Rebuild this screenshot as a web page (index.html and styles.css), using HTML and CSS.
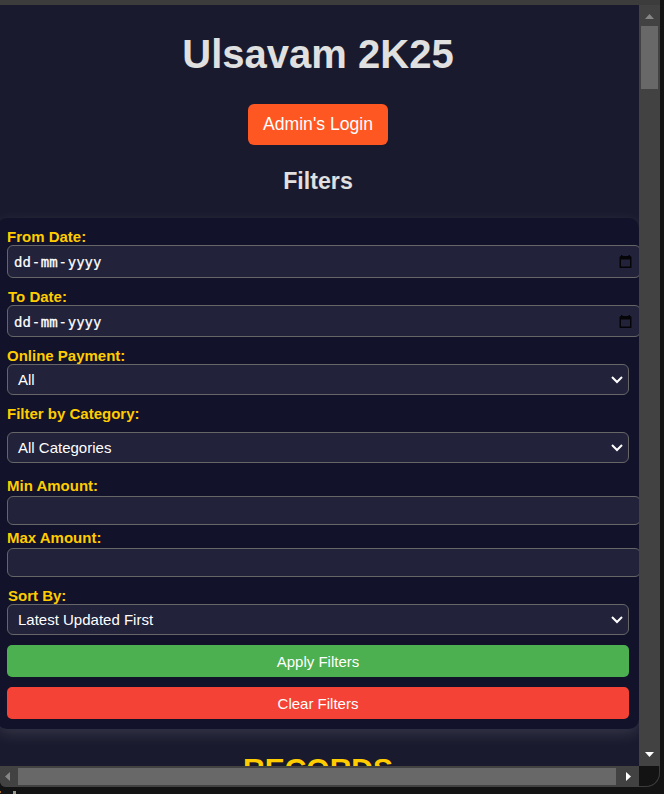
FILE: index.html
```html
<!DOCTYPE html>
<html lang="en">
<head>
<meta charset="utf-8">
<title>Ulsavam 2K25</title>
<link rel="stylesheet" href="styles.css">
</head>
<body>
<div class="window">
  <main class="page">
    <h1>Ulsavam 2K25</h1>
    <button class="login">Admin's Login</button>
    <h2>Filters</h2>
    <section class="panel">
      <div class="label">From Date:</div>
      <div class="control date wide"><span class="mask"><span>dd</span><i>-</i><span class="month">mm</span><i>-</i><span>yyyy</span></span>
        <svg class="calendar" width="13" height="14" viewBox="0 0 13 14"><path d="M2 0h1.500v1h6V0H11v1h.5l1 1v10.500l-.5.500H1l-.5-.5V2l1-1H2zM2 4.500v7h9v-7z" fill="#050508" fill-rule="evenodd"/></svg></div>
      <div class="label to-date">To Date:</div>
      <div class="control date date-to wide"><span class="mask"><span>dd</span><i>-</i><span class="month">mm</span><i>-</i><span>yyyy</span></span>
        <svg class="calendar" width="13" height="14" viewBox="0 0 13 14"><path d="M2 0h1.500v1h6V0H11v1h.5l1 1v10.500l-.5.500H1l-.5-.5V2l1-1H2zM2 4.500v7h9v-7z" fill="#050508" fill-rule="evenodd"/></svg></div>
      <div class="label payment">Online Payment:</div>
      <div class="control select"><span>All</span><svg class="chevron" width="12" height="8" viewBox="0 0 12 8"><path d="M1 1l5 5 5-5"/></svg></div>
      <div class="label category">Filter by Category:</div>
      <div class="control select"><span>All Categories</span><svg class="chevron" width="12" height="8" viewBox="0 0 12 8"><path d="M1 1l5 5 5-5"/></svg></div>
      <div class="label minimum">Min Amount:</div>
      <div class="control amount wide"></div>
      <div class="label maximum">Max Amount:</div>
      <div class="control amount wide"></div>
      <div class="label sort">Sort By:</div>
      <div class="control select"><span>Latest Updated First</span><svg class="chevron" width="12" height="8" viewBox="0 0 12 8"><path d="M1 1l5 5 5-5"/></svg></div>
      <button class="action apply">Apply Filters</button>
      <button class="action clear">Clear Filters</button>
    </section>
    <h2 class="records">RECORDS</h2>
  </main>
  <div class="vbar">
    <svg width="9" height="5" viewBox="0 0 9 5"><path d="M4.500 0L9 5H0z" fill="#868686"/></svg>
    <div class="vthumb"></div>
    <svg class="arrow-down" width="9" height="5" viewBox="0 0 9 5"><path d="M0 0h9L4.500 5z" fill="#fff"/></svg>
  </div>
  <div class="hbar">
    <svg width="5" height="9" viewBox="0 0 5 9"><path d="M5 0v9L0 4.500z" fill="#868686"/></svg>
    <div class="hthumb"></div>
    <svg class="arrow-right" width="5" height="9" viewBox="0 0 5 9"><path d="M0 0v9l5-4.500z" fill="#fff"/></svg>
  </div>
  <div class="corner"></div>
</div>
<div class="backdrop"><span class="fleck"></span><span class="fleck pale"></span></div>
</body>
</html>
```
FILE: styles.css
```css
* { box-sizing: border-box; }

body {
  margin: 0;
  height: 794px;
  overflow: hidden;
  background: #131313;
  font-family: "Liberation Sans", Arial, sans-serif;
}

.window {
  display: grid;
  grid-template-columns: 639px 21px;
  grid-template-rows: 761px 21px;
  width: 660px;
  height: 787px;
  padding-top: 5px;
  background: #3c3c3c;
  border-radius: 0 0 14px 6px;
  overflow: hidden;
}

.page {
  overflow: hidden;
  background: #1a1a2e;
  text-align: center;
}

h1 {
  margin: 25px 3px 0 0;
  height: 48px;
  line-height: 48px;
  font-size: 40px;
  color: #e0e0e0;
}

.login {
  display: block;
  width: 140px;
  height: 41px;
  margin: 26px 0 0 248px;
  padding: 0;
  border: 0;
  border-radius: 6px;
  background: #ff5722;
  color: #fff;
  font: 17.6px "Liberation Sans", Arial, sans-serif;
}

h2 {
  margin: 22px 3px 0 0;
  height: 28px;
  line-height: 28px;
  font-size: 23.2px;
  color: #e0e0e0;
}

.panel {
  width: 642px;
  height: 511px;
  margin: 23px 0 0 -3px;
  padding: 10px;
  border-radius: 10px;
  background: #12122a;
  box-shadow: 0 5px 15px rgba(255, 255, 255, 0.12);
  text-align: left;
}

.label {
  height: 17px;
  line-height: 17px;
  font-size: 15px;
  font-weight: bold;
  color: #fc0;
}

.to-date { margin-top: 10px; padding-left: 1px; }
.payment { margin-top: 10px; }
.category { margin: 10px 0 10px; }
.minimum { margin: 14px 0 2px; }
.maximum { margin: 4px 0 2px; }
.sort { margin-top: 10px; padding-left: 1px; }

.control {
  display: flex;
  align-items: center;
  width: 622px;
  border: 1px solid #666;
  border-radius: 6px;
  background: #22223b;
  color: #fff;
}

.wide { width: 634px; }
.date { height: 33px; padding: 0 8px 0 6px; }
.date-to { height: 32px; padding-top: 1px; }
.amount { height: 29px; }
.select { height: 31px; padding: 0 5px 0 10px; font-size: 15px; }

.mask {
  display: flex;
  font: 14px "DejaVu Sans Mono", monospace;
  -webkit-text-stroke: 0.2px #fff;
}

.mask i { width: 10px; text-align: center; font-style: normal; }
.month { -webkit-text-stroke-width: 0.35px; }

.calendar { margin-left: auto; }

.chevron {
  margin-left: auto;
  fill: none;
  stroke: #fff;
  stroke-width: 2;
}

.action {
  display: block;
  width: 622px;
  height: 32px;
  margin-top: 10px;
  padding: 0;
  border: 0;
  border-radius: 5px;
  color: #fff;
  font: 15px "Liberation Sans", Arial, sans-serif;
}

.apply { background: #4caf50; }
.clear { background: #f44336; }

.records {
  margin-top: 22px;
  height: 36px;
  line-height: 36px;
  font-size: 30px;
  color: #fc0;
}

.vbar {
  display: flex;
  flex-direction: column;
  align-items: center;
  padding: 9px 0;
  background: #424242;
}

.vthumb {
  width: 17px;
  height: 63px;
  margin-top: 7px;
  background: #686868;
}

.arrow-down { margin-top: auto; }

.hbar {
  display: flex;
  align-items: center;
  padding: 0 8px 0 5px;
  background: #424242;
}

.hthumb {
  width: 598px;
  height: 17px;
  margin-left: 8px;
  background: #686868;
}

.arrow-right { margin-left: auto; }

.corner {
  background: #131313;
  border: solid #3c3c3c;
  border-width: 0 1px 1px 0;
  border-bottom-right-radius: 14px;
}

.backdrop {
  display: flex;
  gap: 12px;
  padding-top: 4px;
}

.fleck { width: 1px; height: 2px; background: #a66a24; }
.pale { width: 3px; height: 3px; background: #9a9a90; }
```
